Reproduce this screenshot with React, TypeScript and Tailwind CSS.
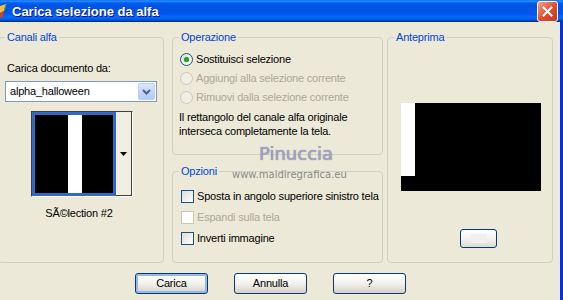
import { Fragment } from 'react'

const font = { fontFamily: '"Liberation Sans", Arial, sans-serif' }

function Radio({ checked, disabled, label }: { checked?: boolean; disabled?: boolean; label: string }) {
  return (
    <div className="flex items-center h-[19px] gap-[3px] whitespace-nowrap">
      <span
        className={`w-[13px] h-[13px] shrink-0 rounded-full border flex items-center justify-center ${
          disabled ? 'border-[#cac8bb] bg-[#f1efe4]' : 'border-[#1c5180] bg-gradient-to-br from-[#dcdcd7] to-white'
        }`}
      >
        {checked && <span className="w-[5px] h-[5px] rounded-full bg-[#21a121] shadow-[0_0_1px_#5fd35f]" />}
      </span>
      <span className={disabled ? 'text-[#aca899]' : 'text-black'}>{label}</span>
    </div>
  )
}

function Check({ disabled, label }: { disabled?: boolean; label: string }) {
  return (
    <div className="flex items-center h-[21px] gap-[3px] whitespace-nowrap">
      <span
        className={`w-[13px] h-[13px] shrink-0 border ${
          disabled ? 'border-[#cac8bb] bg-white' : 'border-[#1c5180] bg-gradient-to-br from-[#dcdcd7] to-white'
        }`}
      />
      <span className={disabled ? 'text-[#aca899]' : 'text-black'}>{label}</span>
    </div>
  )
}

function XpButton({ label, isDefault }: { label: string; isDefault?: boolean }) {
  return (
    <button
      className={`w-[73px] h-[21px] rounded-[3px] border border-[#003c74] bg-gradient-to-b from-white via-[#f2f1ec] to-[#d6d0c5] text-[11px] text-black ${
        isDefault ? 'shadow-[inset_0_0_0_2px_#98b8ea]' : ''
      }`}
    >
      {label}
    </button>
  )
}

export default function App() {
  const buttons = ['Carica', 'Annulla', '?']
  return (
    <div className="relative w-[563px] h-[300px] overflow-hidden bg-[#ece9d8] text-[11px] leading-[13px]" style={font}>
      {/* title bar */}
      <div className="h-[22px] flex items-center bg-[linear-gradient(180deg,#0058ee_0%,#3593ff_4%,#288eff_6%,#127dff_8%,#036ffc_10%,#0262ee_14%,#0057e5_20%,#0054e3_24%,#0055eb_56%,#005bf5_66%,#026afe_76%,#0062ef_86%,#0052d6_92%,#0040ab_94%,#003092_100%)]">
        <svg width="8" height="16" viewBox="0 0 8 16" className="shrink-0">
          <path d="M0 3 L6 1 L4 8 L0 10 Z" fill="#f0c040" />
          <path d="M0 10 L4 8 L3 14 L0 15 Z" fill="#d04030" />
          <path d="M5 2 L7 1 L5 7 L4 8 Z" fill="#40a040" />
        </svg>
        <span className="ml-[4px] text-white font-bold text-[13px] [text-shadow:1px_1px_#0f1089]">
          Carica selezione da alfa
        </span>
        <div className="ml-auto mr-[5px] w-[21px] h-[21px] rounded-[3px] border border-white bg-gradient-to-br from-[#f0a08a] via-[#e0502f] to-[#c23a1c] flex items-center justify-center">
          <svg width="11" height="11" viewBox="0 0 11 11">
            <path d="M1.5 1.5 L9.5 9.5 M9.5 1.5 L1.5 9.5" stroke="white" strokeWidth="2" strokeLinecap="square" />
          </svg>
        </div>
      </div>

      <div className="flex h-[278px] tracking-[-0.2px]">
        <div className="flex-1 flex flex-col pt-[9px]">
          <div className="flex h-[232px]">
            {/* Canali alfa */}
            <fieldset className="-ml-[2px] w-[166px] h-[232px] border border-[#d0d0bf] rounded-[4px]">
              <legend className="ml-[6px] px-[2px] text-[#0046d5]">Canali alfa</legend>
              <div className="flex flex-col">
                <div className="mt-[18px] pl-[8px]">Carica documento da:</div>
                <div className="mt-[6px] ml-[6px] w-[152px] h-[21px] border border-[#7f9db9] bg-white flex items-center">
                  <span className="pl-[4px] flex-1">alpha_halloween</span>
                  <span className="w-[17px] h-[17px] mr-[1px] rounded-[2px] border border-[#b9d1fa] bg-gradient-to-b from-[#dae6fd] to-[#b4c8f5] flex items-center justify-center">
                    <svg width="9" height="6" viewBox="0 0 9 6">
                      <path d="M1 1 L4.5 4.5 L8 1" stroke="#4d6185" strokeWidth="2" fill="none" />
                    </svg>
                  </span>
                </div>
                <div className="mt-[9px] ml-[32px] flex w-[102px] h-[86px] border-t border-l border-t-[#404040] border-l-[#404040] border-b border-r border-b-white border-r-white">
                  <div className="w-[84px] h-full border-[3px] border-[#316ac5] bg-black flex">
                    <div className="ml-[33px] w-[14px] h-full bg-white" />
                  </div>
                  <div className="flex-1 h-full bg-[#f1efe2] border-r border-b border-r-[#404040] border-b-[#404040] flex items-center justify-center">
                    <svg width="7" height="4" viewBox="0 0 7 4">
                      <path d="M0 0 H7 L3.5 4 Z" fill="black" />
                    </svg>
                  </div>
                </div>
                <div className="mt-[10px] text-center pr-[4px]">SÃ©lection #2</div>
              </div>
            </fieldset>

            {/* middle column */}
            <div className="ml-[8px] w-[211px] flex flex-col">
              <fieldset className="h-[124px] border border-[#d0d0bf] rounded-[4px]">
                <legend className="ml-[6px] px-[2px] text-[#0046d5]">Operazione</legend>
                <div className="mt-[6px] pl-[7px]">
                  <Radio checked label="Sostituisci selezione" />
                  <Radio disabled label="Aggiungi alla selezione corrente" />
                  <Radio disabled label="Rimuovi dalla selezione corrente" />
                </div>
                <p className="mt-[3px] pl-[6px] leading-[14px]">
                  Il rettangolo del canale alfa originale
                  <br />
                  interseca completamente la tela.
                </p>
              </fieldset>
              <fieldset className="mt-[10px] h-[98px] border border-[#d0d0bf] rounded-[4px]">
                <legend className="ml-[6px] px-[2px] text-[#0046d5]">Opzioni</legend>
                <div className="mt-[8px] pl-[8px]">
                  <Check label="Sposta in angolo superiore sinistro tela" />
                  <Check disabled label="Espandi sulla tela" />
                  <Check label="Inverti immagine" />
                </div>
              </fieldset>
            </div>

            {/* Anteprima */}
            <fieldset className="ml-[4px] w-[166px] h-[232px] border border-[#d0d0bf] rounded-[4px]">
              <legend className="ml-[6px] px-[2px] text-[#0046d5]">Anteprima</legend>
              <div className="mt-[59px] ml-[13px] w-[140px] h-[88px] bg-black">
                <div className="w-[14px] h-[73px] bg-white" />
              </div>
              <div className="mt-[38px] ml-[72px] w-[37px] h-[19px] rounded-[3px] border border-[#003c74] bg-gradient-to-b from-white via-[#f4f3ee] to-[#dedad0] flex items-center justify-center">
                <div className="w-[16px] h-[9px] bg-[#f0f0f0]" />
              </div>
            </fieldset>
          </div>

          <div className="mt-[10px] ml-[135px] flex gap-[26px]">
            {buttons.map((b, i) => (
              <Fragment key={b}>
                <XpButton label={b} isDefault={i === 0} />
              </Fragment>
            ))}
          </div>
        </div>
        <div className="w-[3px] bg-[#0831d9]" />
      </div>

      {/* watermark */}
      <div
        className="absolute left-[259px] top-[144px] text-[18px] leading-[20px] text-[#a3a3c2] [text-shadow:0_0_1px_#6d6d90]"
        style={{ fontFamily: '"DejaVu Sans", Verdana, sans-serif' }}
      >
        Pinuccia
      </div>
      <div
        className="absolute left-[232px] top-[169px] text-[10px] leading-[12px] text-[#8a8a8a]"
        style={{ fontFamily: '"DejaVu Sans", Verdana, sans-serif' }}
      >
        www.maidiregrafica.eu
      </div>
    </div>
  )
}
